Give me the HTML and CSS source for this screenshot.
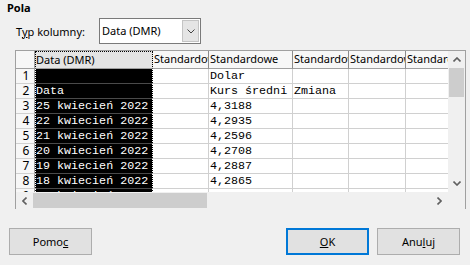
FILE: index.html
```html
<!DOCTYPE html>
<html lang="pl">
<head>
    <meta charset="UTF-8">
    <title>Pola</title>
    <link rel="stylesheet" href="styles.css">
</head>
<body>
    <div class="dialog">
        <div class="title">Pola</div>
        <div class="type-row">
            <label class="type-label">T<u>y</u>p kolumny:</label>
            <div class="combo">
                <span class="combo-text">Data (DMR)</span>
                <span class="combo-btn">
                    <svg width="8" height="5" viewBox="0 0 8 5"><polyline points="0.5,0.5 4,4 7.5,0.5" fill="none" stroke="#444" stroke-width="1"/></svg>
                </span>
            </div>
        </div>

        <div class="sheet">
            <div class="sheet-main">
                <div class="cells">
                    <div class="row head">
                        <div class="c rh"></div>
                        <div class="c a">Data (DMR)</div>
                        <div class="c b">Standardowe</div>
                        <div class="c cc">Standardowe</div>
                        <div class="c d">Standardowe</div>
                        <div class="c e">Standardowe</div>
                        <div class="c f">Standardowe</div>
                    </div>
                    <div class="row">
                        <div class="c rh">1</div>
                        <div class="c a"></div>
                        <div class="c b"></div>
                        <div class="c cc">Dolar</div>
                        <div class="c d"></div>
                        <div class="c e"></div>
                        <div class="c f"></div>
                    </div>
                    <div class="row">
                        <div class="c rh">2</div>
                        <div class="c a">Data</div>
                        <div class="c b"></div>
                        <div class="c cc">Kurs średni</div>
                        <div class="c d">Zmiana</div>
                        <div class="c e"></div>
                        <div class="c f"></div>
                    </div>
                    <div class="row">
                        <div class="c rh">3</div>
                        <div class="c a">25 kwiecień 2022</div>
                        <div class="c b"></div>
                        <div class="c cc">4,3188</div>
                        <div class="c d"></div>
                        <div class="c e"></div>
                        <div class="c f"></div>
                    </div>
                    <div class="row">
                        <div class="c rh">4</div>
                        <div class="c a">22 kwiecień 2022</div>
                        <div class="c b"></div>
                        <div class="c cc">4,2935</div>
                        <div class="c d"></div>
                        <div class="c e"></div>
                        <div class="c f"></div>
                    </div>
                    <div class="row">
                        <div class="c rh">5</div>
                        <div class="c a">21 kwiecień 2022</div>
                        <div class="c b"></div>
                        <div class="c cc">4,2596</div>
                        <div class="c d"></div>
                        <div class="c e"></div>
                        <div class="c f"></div>
                    </div>
                    <div class="row">
                        <div class="c rh">6</div>
                        <div class="c a">20 kwiecień 2022</div>
                        <div class="c b"></div>
                        <div class="c cc">4,2708</div>
                        <div class="c d"></div>
                        <div class="c e"></div>
                        <div class="c f"></div>
                    </div>
                    <div class="row">
                        <div class="c rh">7</div>
                        <div class="c a">19 kwiecień 2022</div>
                        <div class="c b"></div>
                        <div class="c cc">4,2887</div>
                        <div class="c d"></div>
                        <div class="c e"></div>
                        <div class="c f"></div>
                    </div>
                    <div class="row">
                        <div class="c rh">8</div>
                        <div class="c a">18 kwiecień 2022</div>
                        <div class="c b"></div>
                        <div class="c cc">4,2865</div>
                        <div class="c d"></div>
                        <div class="c e"></div>
                        <div class="c f"></div>
                    </div>
                    <div class="row">
                        <div class="c rh">9</div>
                        <div class="c a">14 kwiecień 2022</div>
                        <div class="c b"></div>
                        <div class="c cc">4,2581</div>
                        <div class="c d"></div>
                        <div class="c e"></div>
                        <div class="c f"></div>
                    </div>
                </div>
                <div class="vscroll">
                    <div class="arrow">
                        <svg width="8" height="5" viewBox="0 0 8 5"><polyline points="0.5,4.5 4,1 7.5,4.5" fill="none" stroke="#606060" stroke-width="1.6"/></svg>
                    </div>
                    <div class="vthumb"></div>
                    <div class="vtrack"></div>
                    <div class="arrow">
                        <svg width="8" height="5" viewBox="0 0 8 5"><polyline points="0.5,0.5 4,4 7.5,0.5" fill="none" stroke="#606060" stroke-width="1.6"/></svg>
                    </div>
                </div>
            </div>
            <div class="hscroll">
                <div class="harrow">
                    <svg width="5" height="8" viewBox="0 0 5 8"><polyline points="4.5,0.5 1,4 4.5,7.5" fill="none" stroke="#606060" stroke-width="1.6"/></svg>
                </div>
                <div class="hthumb"></div>
                <div class="htrack"></div>
                <div class="harrow">
                    <svg width="5" height="8" viewBox="0 0 5 8"><polyline points="0.5,0.5 4,4 0.5,7.5" fill="none" stroke="#606060" stroke-width="1.6"/></svg>
                </div>
                <div class="corner"></div>
            </div>
        </div>

        <div class="buttons">
            <button class="btn">Pomo<u>c</u></button>
            <div class="spacer"></div>
            <button class="btn default"><u>O</u>K</button>
            <button class="btn">Anu<u>l</u>uj</button>
        </div>
    </div>
</body>
</html>
```

FILE: styles.css
```css
body {
    margin: 0;
    background-color: #f0f0f0;
    font-family: "Noto Sans", sans-serif;
    font-size: 11px;
    color: #000;
    width: 470px;
    height: 265px;
    overflow: hidden;
}

.dialog {
    display: flex;
    flex-direction: column;
}

.title {
    height: 18px;
    line-height: 16px;
    padding-left: 7px;
    font-weight: bold;
}

.type-row {
    display: flex;
    align-items: center;
    height: 26px;
    padding-left: 16px;
}

.type-label {
    width: 83px;
}

.combo {
    display: flex;
    width: 102px;
    height: 26px;
    box-sizing: border-box;
    border: 1px solid #7a7a7a;
    background-color: #fff;
}

.combo-text {
    flex: 1;
    line-height: 24px;
    padding-left: 2px;
}

.combo-btn {
    width: 17px;
    margin: 1px;
    box-sizing: border-box;
    border: 1px solid #c4c4c4;
    background-color: #e5e5e5;
    display: flex;
    align-items: center;
    justify-content: center;
}

/* arkusz podgladu */
.sheet {
    margin: 6px 0 0 15px;
    width: 451px;
    height: 159px;
    box-sizing: border-box;
    border: 1px solid #a0a0a0;
    border-bottom: none;
}

.sheet-main {
    display: flex;
    height: 141px;
}

.cells {
    width: 432px;
    height: 141px;
    overflow: hidden;
    background-color: #fff;
}

.row {
    display: flex;
    height: 15px;
}

.row.head {
    height: 18px;
}

.c {
    flex: none;
    box-sizing: border-box;
    border-right: 1px solid #d0d0d0;
    border-bottom: 1px solid #d0d0d0;
    font-family: "Liberation Mono", monospace;
    font-size: 11.7px;
    line-height: 14px;
    white-space: nowrap;
    overflow: hidden;
    padding-left: 1px;
}

.head .c {
    font-family: "Noto Sans", sans-serif;
    font-size: 11px;
    line-height: 16px;
    background-color: #f7f7f7;
    border-right-color: #8c8c8c;
    border-bottom-color: #a0a0a0;
}

.rh {
    width: 19px;
    font-family: "Noto Sans", sans-serif;
    font-size: 12px;
    text-align: center;
    padding-left: 2px;
    background-color: #f7f7f7;
    border-right-color: #a0a0a0;
}

.head .rh {
    border-right-color: #a0a0a0;
}

.a {
    width: 118px;
    background-color: #000;
    color: #fff;
    border-left: 1px dotted #fff;
    border-right: 1px dotted #fff;
    border-bottom-color: #4a4a4a;
    padding-left: 0;
}

.head .a {
    background-color: #e4e4e4;
    color: #000;
    border-left: 1px dotted #000;
    border-right: 1px dotted #000;
    border-top: 1px dotted #000;
    line-height: 15px;
}

.b { width: 56px; }
.cc { width: 84px; }
.d { width: 56px; }
.e { width: 57px; }
.f { width: 60px; }

.vscroll {
    width: 17px;
    display: flex;
    flex-direction: column;
    background-color: #f0f0f0;
}

.arrow {
    height: 17px;
    display: flex;
    align-items: center;
    justify-content: center;
}

.vthumb {
    height: 29px;
    margin: 0 1px;
    background-color: #cdcdcd;
}

.vtrack {
    flex: 1;
}

.hscroll {
    display: flex;
    height: 17px;
    background-color: #f0f0f0;
}

.harrow {
    width: 17px;
    display: flex;
    align-items: center;
    justify-content: center;
}

.hthumb {
    width: 174px;
    margin: 1px 0;
    background-color: #cdcdcd;
}

.htrack {
    flex: 1;
}

.corner {
    width: 17px;
}

.buttons {
    display: flex;
    margin-top: 19px;
    padding: 0 10px 0 9px;
}

.spacer {
    flex: 1;
}

.btn {
    width: 83px;
    height: 27px;
    box-sizing: border-box;
    margin: 0;
    border: 1px solid #adadad;
    background-color: #e1e1e1;
    font-family: "Noto Sans", sans-serif;
    font-size: 11px;
    color: #000;
    padding: 0;
}

.btn.default {
    border: 2px solid #0078d7;
    margin-right: 8px;
}
```
